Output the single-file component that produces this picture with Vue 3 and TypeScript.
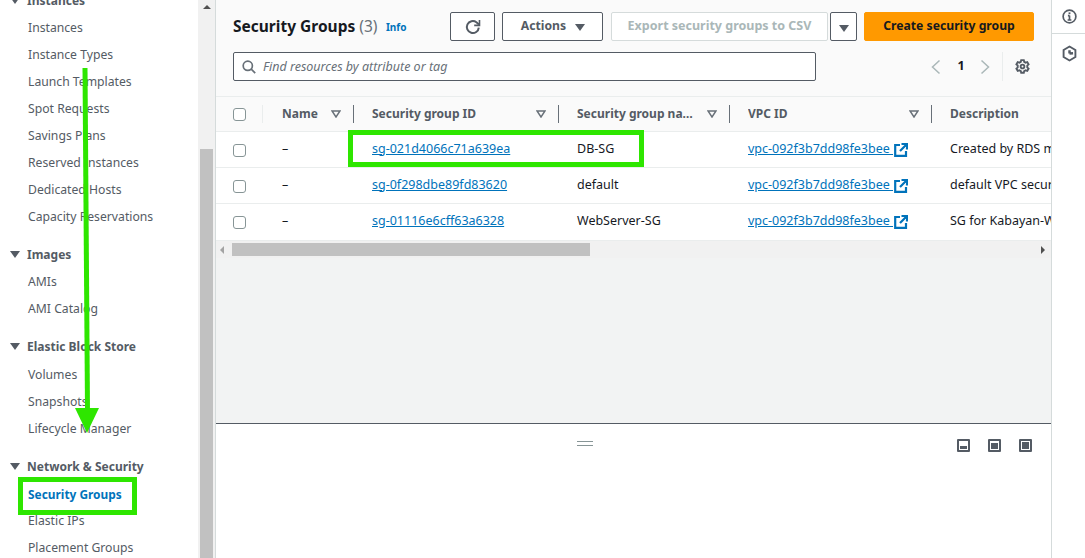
<script setup lang="ts">
const groups = [
  { title: 'Instances', items: ['Instances', 'Instance Types', 'Launch Templates', 'Spot Requests', 'Savings Plans', 'Reserved Instances', 'Dedicated Hosts', 'Capacity Reservations'] },
  { title: 'Images', items: ['AMIs', 'AMI Catalog'] },
  { title: 'Elastic Block Store', items: ['Volumes', 'Snapshots', 'Lifecycle Manager'] },
  { title: 'Network & Security', items: ['Security Groups', 'Elastic IPs', 'Placement Groups'] },
]
const columns = ['Name', 'Security group ID', 'Security group name', 'VPC ID', 'Description']
const rows = [
  { id: 'sg-021d4066c71a639ea', name: 'DB-SG', desc: 'Created by RDS management console' },
  { id: 'sg-0f298dbe89fd83620', name: 'default', desc: 'default VPC security group' },
  { id: 'sg-01116e6cff63a6328', name: 'WebServer-SG', desc: 'SG for Kabayan-Web servers' },
]
</script>

<template>
  <div class="page">
    <aside class="side">
      <nav class="nav">
        <section v-for="g in groups" :key="g.title" class="group">
          <h3 class="group-title"><span class="tri"></span>{{ g.title }}</h3>
          <a v-for="i in g.items" :key="i" class="nav-item" :class="{ active: i === 'Security Groups' }">{{ i }}</a>
        </section>
      </nav>
      <div class="vbar">
        <span class="vbar-up"></span>
        <span class="vbar-thumb"></span>
      </div>
    </aside>

    <main class="main">
      <div class="upper">
        <header class="head">
          <div class="head-top">
            <h1 class="title">Security Groups <span class="count">(3)</span></h1>
            <a class="info">Info</a>
            <div class="actions">
              <button class="btn refresh" aria-label="Refresh">
                <svg width="16" height="16" viewBox="0 0 16 16" fill="none" stroke="#545b64" stroke-width="2"><path d="M13.800 8.600A6 6 0 1 1 11.400 3.200L14 5.400"/><path d="M14.500 1v5.400H9.200" stroke-width="1.600"/></svg>
              </button>
              <button class="btn act">Actions<span class="caret"></span></button>
              <button class="btn export">Export security groups to CSV</button>
              <button class="btn drop" aria-label="More"><span class="caret"></span></button>
              <button class="btn create">Create security group</button>
            </div>
          </div>
          <div class="head-bottom">
            <div class="search">
              <svg width="14" height="14" viewBox="0 0 14 14" fill="none" stroke="#687078" stroke-width="1.700"><circle cx="5.800" cy="5.800" r="4.600"/><path d="M9.200 9.200l4 4"/></svg>
              <span class="placeholder">Find resources by attribute or tag</span>
            </div>
            <div class="pager">
              <svg width="10" height="16" viewBox="0 0 10 16" fill="none" stroke="#aab7b8" stroke-width="1.500"><path d="M8.500 1.500L1.500 8l7 6.500"/></svg>
              <span class="page-no">1</span>
              <svg width="10" height="16" viewBox="0 0 10 16" fill="none" stroke="#aab7b8" stroke-width="1.500"><path d="M1.500 1.500L8.500 8l-7 6.500"/></svg>
              <span class="pager-sep"></span>
              <svg class="gear" width="15" height="15" viewBox="0 0 16 16" fill="none" stroke="#545b64" stroke-width="2"><path d="M6.600 1.200h2.800l.4 1.800 1.500.9 1.800-.6 1.400 2.400-1.400 1.300v1.900l1.400 1.300-1.400 2.400-1.800-.6-1.500.9-.4 1.800H6.600l-.4-1.800-1.500-.9-1.800.6-1.400-2.400 1.400-1.300V6.900L1.500 5.700l1.400-2.400 1.800.6 1.500-.9z"/><circle cx="8" cy="8" r="2"/></svg>
            </div>
          </div>
        </header>

        <div class="table">
          <div class="row thead">
            <div class="cell check-cell"><span class="check"></span></div>
            <div v-for="c in columns" :key="c" class="cell th" :class="{ last: c === 'Description' }">
              <span class="th-label">{{ c }}</span>
              <svg v-if="c !== 'Description'" class="sort" width="10" height="8" viewBox="0 0 10 8" fill="none" stroke="#687078" stroke-width="1.500"><path d="M1 1h8L5 7z"/></svg>
            </div>
          </div>
          <div v-for="r in rows" :key="r.id" class="row tbody">
            <div class="cell check-cell"><span class="check"></span></div>
            <div class="cell">–</div>
            <div class="cell"><a class="link">{{ r.id }}</a></div>
            <div class="cell">{{ r.name }}</div>
            <div class="cell">
              <a class="link">vpc-092f3b7dd98fe3bee&nbsp;</a>
              <svg class="ext" width="14" height="14" viewBox="0 0 14 14" fill="none" stroke="#0073bb" stroke-width="2.200"><path d="M6 2H1.200v10.800H12V8"/><path d="M6 8l6.500-6.500M7.500 1H13v5.500" /></svg>
            </div>
            <div class="cell desc">{{ r.desc }}</div>
          </div>
        </div>

        <div class="hbar">
          <span class="hbar-left"></span>
          <div class="hbar-track"><span class="hbar-thumb"></span></div>
          <span class="hbar-right"></span>
        </div>
      </div>

      <div class="lower">
        <div class="grip"></div>
        <div class="split-icons">
          <span class="split s1"><i></i></span>
          <span class="split s2"><i></i></span>
          <span class="split s3"><i></i></span>
        </div>
      </div>
    </main>

    <aside class="rail">
      <div class="rail-cell first">
        <svg width="15" height="15" viewBox="0 0 16 16" fill="none" stroke="#545b64" stroke-width="1.800"><circle cx="8" cy="8" r="6.800"/><path d="M8 7v4.500M6 11.700h4M6.300 7H8" /><path d="M8 3.600v1.900" stroke-width="2"/></svg>
      </div>
      <div class="rail-cell">
        <svg width="15" height="17" viewBox="0 0 16 18" fill="none" stroke="#545b64" stroke-width="2"><path d="M8 1.500l6.300 3.700v7.600L8 16.500l-6.300-3.700V5.200z"/><path d="M8 9l3.800-.2M8 9V5.500" stroke-width="2.600"/></svg>
      </div>
    </aside>

    <svg class="marks" width="1085" height="558" viewBox="0 0 1085 558">
      <path d="M85 68L87.500 410" stroke="#2ee600" stroke-width="5" fill="none"/>
      <path d="M75 408h24l-12 25z" fill="#2ee600"/>
      <rect x="350.500" y="132.500" width="291" height="32" fill="none" stroke="#2ee600" stroke-width="5"/>
      <rect x="20.500" y="479.500" width="114" height="33" fill="none" stroke="#2ee600" stroke-width="5"/>
    </svg>
  </div>
</template>

<style>
html, body { margin: 0; padding: 0; background: #fff; }
</style>

<style scoped>
.page {
  position: relative;
  display: flex;
  width: 1085px;
  height: 558px;
  overflow: hidden;
  background: #fff;
  font-family: "Noto Sans", "Open Sans", sans-serif;
  font-size: 12.500px;
  color: #16191f;
}
.side {
  display: flex;
  flex: 0 0 215px;
  height: 558px;
  overflow: hidden;
  border-right: 1px solid #d5dbdb;
  box-sizing: content-box;
}
.nav { flex: 0 0 198px; margin-top: -14px; padding-left: 10px; box-sizing: border-box; font-size: 12.200px; }
.group { margin-bottom: 10.400px; }
.group-title {
  display: flex;
  align-items: center;
  gap: 7px;
  height: 28px;
  margin: 0;
  font-size: 12px;
  font-weight: 700;
  color: #545b64;
}
.tri {
  width: 0;
  height: 0;
  border-left: 5px solid transparent;
  border-right: 5px solid transparent;
  border-top: 7px solid #545b64;
}
.nav-item {
  display: flex;
  align-items: center;
  height: 27px;
  padding-left: 18px;
  color: #545b64;
}
.nav-item.active { color: #0073bb; font-weight: 700; font-size: 11.900px; }
.vbar { flex: 0 0 17px; background: #f1f1f1; display: flex; flex-direction: column; align-items: center; width: 17px; }
.vbar-up {
  width: 0;
  height: 0;
  margin-top: 5px;
  border-left: 4px solid transparent;
  border-right: 4px solid transparent;
  border-bottom: 4px solid #505050;
}
.vbar-thumb { width: 13px; height: 409px; margin-top: 140px; background: #c1c1c1; }
.main { flex: 0 0 835px; display: flex; flex-direction: column; min-width: 0; }
.upper {
  height: 423px;
  flex: none;
  background: #f2f3f3;
  border-bottom: 1px solid #545b64;
  overflow: hidden;
}
.head { padding: 12px 17px 0 17px; background: #fafafa; border-bottom: 1px solid #eaeded; box-sizing: content-box; height: 84px; }
.head-top { display: flex; align-items: center; height: 29px; }
.title { margin: 0; padding-bottom: 2px; font-size: 15.500px; font-weight: 700; color: #16191f; white-space: nowrap; }
.count { font-weight: 400; color: #687078; }
.info { margin-left: 8.500px; font-size: 10px; font-weight: 700; color: #0073bb; }
.actions { display: flex; margin-left: auto; }
.btn {
  height: 29px;
  box-sizing: border-box;
  font: 700 12.200px "Noto Sans", "Open Sans", sans-serif;
  color: #545b64;
  background: #fff;
  border: 1px solid #545b64;
  border-radius: 2px;
  padding: 0 0 2px;
  display: flex;
  align-items: center;
  justify-content: center;
}
.refresh { width: 45px; margin-right: 7px; padding: 0; }
.act { width: 101px; margin-right: 8px; gap: 9px; padding-left: 1px; }
.export { width: 217px; margin-right: 2px; color: #aab7b8; border-color: #d5dbdb; font-size: 12.500px; }
.drop { width: 27px; margin-right: 7px; padding: 0; }
.create { width: 170px; background: #f90; border-color: #f90; color: #16191f; }
.caret {
  display: inline-block;
  width: 0;
  height: 0;
  margin-top: 3px;
  border-left: 5px solid transparent;
  border-right: 5px solid transparent;
  border-top: 7px solid #545b64;
}
.head-bottom { display: flex; align-items: center; margin-top: 11px; }
.search {
  display: flex;
  align-items: center;
  gap: 7px;
  width: 583px;
  height: 29px;
  box-sizing: border-box;
  padding-left: 8px;
  background: #fff;
  border: 1px solid #545b64;
  border-radius: 2px;
}
.placeholder { font-style: italic; color: #687078; }
.pager { display: flex; align-items: center; margin-left: auto; margin-right: 4px; }
.page-no { width: 39px; padding: 0 0 2px 1px; box-sizing: border-box; text-align: center; font-weight: 700; font-size: 12.500px; }
.pager-sep { width: 1px; height: 29px; margin: 0 12px; background: #eaeded; }
.table { width: 835px; overflow: hidden; }
.row {
  display: grid;
  grid-template-columns: 47px 91px 205px 171px 202px 300px;
  width: 1016px;
  box-sizing: border-box;
}
.thead { height: 35px; background: #fafafa; border-bottom: 1px solid #eaeded; }
.tbody { height: 36px; background: #fff; border-bottom: 1px solid #eaeded; }
.tbody:last-child { height: 37px; }
.cell { display: flex; align-items: center; padding-left: 18px; padding-bottom: 3px; white-space: nowrap; overflow: hidden; min-width: 0; box-sizing: border-box; }
.cell:nth-child(2) { padding-left: 19px; }
.check-cell { padding: 1px 0 0 17px; }
.check {
  width: 13px;
  height: 13px;
  box-sizing: border-box;
  background: #fff;
  border: 1px solid #879596;
  border-radius: 3px;
}
.th {
  position: relative;
  gap: 12px;
  padding-right: 12px;
  padding-bottom: 2px;
  font-size: 12px;
  font-weight: 700;
  color: #545b64;
}
.th::after {
  content: "";
  position: absolute;
  right: 0;
  top: 8px;
  bottom: 8px;
  width: 1px;
  background: #687078;
}
.th.last::after { display: none; }
.thead .check-cell { position: relative; }
.thead .check-cell::after {
  content: "";
  position: absolute;
  right: 0;
  top: 8px;
  bottom: 8px;
  width: 1px;
  background: #eaeded;
}
.th-label { flex: 1; min-width: 0; overflow: hidden; text-overflow: ellipsis; }
.sort { flex: none; margin-right: 1px; margin-top: 2px; }
.link { color: #0073bb; text-decoration: underline; }
.ext { flex: none; margin-left: 1px; margin-top: 3px; }
.hbar { display: flex; align-items: center; height: 17px; background: #f1f1f1; }
.hbar-left { margin-left: 4px; width: 0; height: 0; border-top: 4px solid transparent; border-bottom: 4px solid transparent; border-right: 4px solid #a3a3a3; }
.hbar-track { flex: 1; margin: 0 0 0 8px; height: 13px; }
.hbar-thumb { display: block; width: 358px; height: 13px; background: #c1c1c1; }
.hbar-right { margin-right: 6px; width: 0; height: 0; border-top: 4px solid transparent; border-bottom: 4px solid transparent; border-left: 4px solid #505050; }
.lower { position: relative; flex: 1; background: #fff; }
.grip {
  position: absolute;
  left: 361px;
  top: 17px;
  width: 16px;
  height: 3px;
  border-top: 1px solid #879596;
  border-bottom: 1px solid #879596;
}
.split-icons { display: flex; justify-content: flex-end; gap: 18px; padding: 15px 19px 0 0; }
.split {
  position: relative;
  width: 13px;
  height: 13px;
  box-sizing: border-box;
  border: 2px solid #545b64;
  border-radius: 1px;
  background: #fff;
}
.split i { position: absolute; left: 1px; right: 1px; bottom: 1px; background: #545b64; }
.s1 i { height: 3px; }
.s2 i { height: 6px; }
.s3 i { top: 1px; }
.rail {
  flex: 0 0 34px;
  border-left: 1px solid #d5dbdb;
  background: #fff;
}
.rail-cell { display: flex; justify-content: center; padding-top: 11px; height: 23px; }
.rail-cell.first { border-bottom: 1px solid #d5dbdb; padding-top: 9px; height: 24px; }
.marks { position: absolute; left: 0; top: 0; pointer-events: none; }
</style>
